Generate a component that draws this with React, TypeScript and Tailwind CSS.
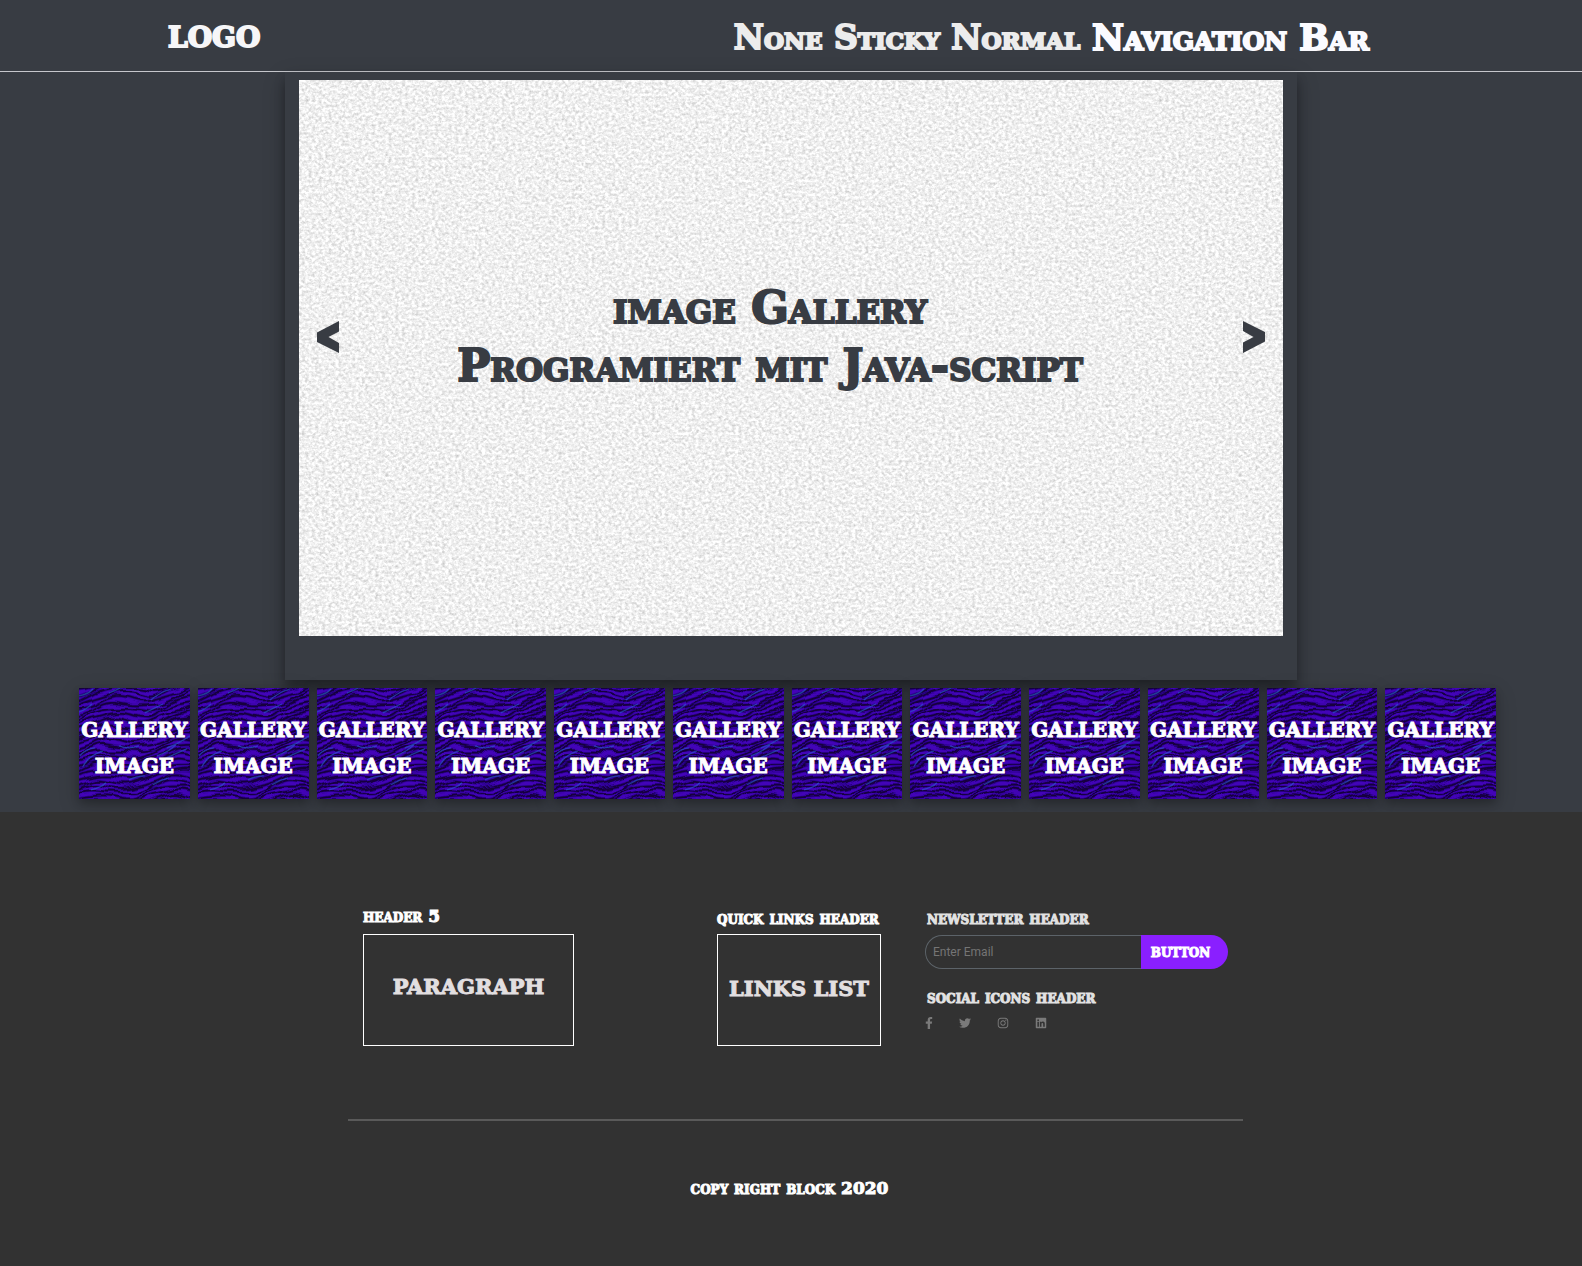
import React from "react";
import { FaFacebookF, FaTwitter, FaInstagram, FaLinkedin } from "react-icons/fa";

const THUMBS = Array.from({ length: 12 }, (_, i) => i);

const STRIPES = Array.from({ length: 32 }, (_, r) => {
  const base = r * 5 - 16;
  const pts: string[] = [];
  for (let x = -8; x <= 120; x += 4) {
    const y = base - x * 0.14 + 4 * Math.sin(x / 13 + r * 0.1 + 1.4) + Math.sin(x / 7 + r * 1.7);
    pts.push(`${x} ${y.toFixed(1)}`);
  }
  return "M" + pts.join(" L");
});

const GLINTS = [
  "M0 8 Q10 6 14 1",
  "M30 5 Q38 2 43 -1",
  "M72 12 Q80 5 92 1",
  "M0 24 Q8 21 13 16",
  "M66 25 Q76 20 84 16",
  "M1 68 Q6 61 16 60",
  "M4 79 Q9 68 24 63",
  "M78 68 Q90 64 97 57",
  "M88 60 Q100 56 111 48",
  "M84 72 Q96 66 108 61",
  "M12 102 Q22 100 27 95",
  "M50 92 Q58 88 66 88",
  "M74 97 Q82 92 90 90",
  "M40 58 Q50 62 60 58",
];

function ZebraTexture() {
  return (
    <svg className="absolute inset-0 h-full w-full" viewBox="0 0 111 111" preserveAspectRatio="none" aria-hidden="true">
      <filter id="ripple" x="0" y="0" width="100%" height="100%" colorInterpolationFilters="sRGB">
        <feTurbulence type="fractalNoise" baseFrequency="0.04 0.06" numOctaves="2" seed="4" result="n" />
        <feDisplacementMap in="SourceGraphic" in2="n" scale="12" xChannelSelector="R" yChannelSelector="G" />
        <feGaussianBlur stdDeviation="0.4" />
      </filter>
      <rect width="111" height="111" fill="#3600a4" />
      <g filter="url(#ripple)" fill="none">
        <rect x="-10" y="-10" width="131" height="131" fill="#4304b8" />
        {STRIPES.map((d, i) => (
          <g key={i}>
            <path d={d} stroke="#22007a" strokeWidth="3.4" opacity="0.6" />
            <path d={d} stroke="#16003e" strokeWidth="1.7" />
          </g>
        ))}
      </g>
      {GLINTS.map((d) => (
        <path key={d} d={d} fill="none" stroke="#2a62d0" strokeWidth="1.3" opacity="0.6" />
      ))}
    </svg>
  );
}

function StoneTexture() {
  return (
    <svg className="absolute inset-0 h-full w-full" aria-hidden="true">
      <filter id="stone" x="0" y="0" width="100%" height="100%" colorInterpolationFilters="sRGB">
        <feTurbulence type="fractalNoise" baseFrequency="0.3 0.36" numOctaves="3" seed="8" />
        <feColorMatrix
          type="matrix"
          values="0.32 0.16 0 0 0.7  0.32 0.16 0 0 0.7  0.32 0.16 0 0 0.7  0 0 0 0 1"
        />
      </filter>
      <rect width="100%" height="100%" fill="#ebebeb" />
      <rect width="100%" height="100%" filter="url(#stone)" />
    </svg>
  );
}

function Arrow({ label, flip }: { label: string; flip?: boolean }) {
  return (
    <button type="button" aria-label={label} className="h-8 w-[22px] shrink-0">
      <svg viewBox="0 0 22 32" className={flip ? "h-8 w-[22px] rotate-180" : "h-8 w-[22px]"} fill="#383c43">
        <polygon points="22,0 22,10.5 11.5,16 22,22 22,32 0,21 0,11.5" />
      </svg>
    </button>
  );
}

const small = "text-[17px] leading-6 font-bold [font-variant:small-caps] whitespace-nowrap [-webkit-text-stroke:1px]";
const boxed = "flex h-28 items-center justify-center border border-white text-[21px] font-bold text-[#e2dfe0] [-webkit-text-stroke:1px]";

export default function App() {
  return (
    <div className="min-h-screen bg-[#323232] font-['DejaVu_Serif',serif] text-white">
      <div className="bg-[#383c43]">
        <header className="flex h-[72px] items-center justify-between border-b border-[#c6c7cc] pt-1 pr-[213px] pl-[168px] font-bold">
          <a href="#home" className="text-[28px] text-[#f6f6f8] [-webkit-text-stroke:2px]">LOGO</a>
          <nav className="flex items-center gap-3 whitespace-nowrap [font-variant:small-caps]">
            <a href="#top" className="text-[33px] leading-10 text-[#ececec] [-webkit-text-stroke:2px]">
              None Sticky Normal
            </a>
            <a href="#nav" className="text-[35px] leading-10 text-[#fbfbff] [-webkit-text-stroke:2px]">Navigation Bar</a>
          </nav>
        </header>

        <main>
          <section className="mx-auto w-[64%] px-[14px] pt-2 pb-11 shadow-[0_8px_10px_rgba(0,0,0,0.25),0_8px_20px_rgba(0,0,0,0.25)]">
            <div className="relative aspect-[984/556]">
              <StoneTexture />
              <div className="relative flex h-full items-center justify-between px-[18px] pb-[42px]">
                <Arrow label="Previous image" />
                <h1 className="flex-1 pr-[42px] text-center text-[44px] leading-[58px] font-bold text-[#383c43] [font-variant:small-caps] [-webkit-text-stroke:2px]">
                  image Gallery
                  <br />
                  Programiert mit Java-script
                </h1>
                <Arrow label="Next image" flip />
              </div>
            </div>
          </section>

          <section className="mt-2 grid grid-cols-12 gap-2 pr-[86px] pb-[13px] pl-[5%]">
            {THUMBS.map((i) => (
              <button
                key={i}
                type="button"
                className="relative flex aspect-square items-center justify-center shadow-[0_4px_8px_rgba(0,0,0,0.2),0_6px_20px_rgba(0,0,0,0.2)]"
              >
                <ZebraTexture />
                <span className="relative pt-2 text-center text-[20px] leading-9 font-bold [-webkit-text-stroke:1px]">
                  GALLERY
                  <br />
                  IMAGE
                </span>
              </button>
            ))}
          </section>
        </main>
      </div>

      <footer className="relative bg-[#323232] pt-[92px] pb-[66px] pl-[9px]">
        <div className="mx-auto max-w-[895px]">
          <div className="flex items-start px-[15px]">
            <section className="mr-auto w-[211px]">
              <h5 className={small}>header 5</h5>
              <p className={`${boxed} mt-[6px] pb-[6px]`}>PARAGRAPH</p>
            </section>
            <section className="w-[164px] pt-[2px]">
              <h5 className={small}>quick links header</h5>
              <div className={`${boxed} mt-1 pb-[2px]`}>
                <a href="#links">LINKS LIST</a>
              </div>
            </section>
            <section className="ml-11 w-[303px] pt-[2px] text-[#e2e2e2]">
              <h5 className={`${small} pl-[2px]`}>newsletter header</h5>
              <form className="mt-[5px] flex h-[34px]" onSubmit={(e) => e.preventDefault()}>
                <input
                  type="email"
                  aria-label="Email"
                  placeholder="Enter Email"
                  className="min-w-0 flex-1 rounded-l-full border border-r-0 border-[#5c6369] pl-[7px] font-['Roboto',sans-serif] text-[12px] placeholder:text-[#757575]"
                />
                <button
                  type="submit"
                  className="w-[87px] rounded-r-full bg-[#8a1fff] pr-2 pb-[2px] text-[17px] leading-6 font-bold text-white [font-variant:small-caps] [-webkit-text-stroke:1px]"
                >
                  button
                </button>
              </form>
              <h5 className={`${small} mt-4 pl-[2px]`}>social icons header</h5>
              <div className="mt-2 flex gap-[26px] text-[12px] text-[#7a7a7a]">
                <a href="#facebook" aria-label="Facebook" className="w-2"><FaFacebookF className="-ml-[2px]" /></a>
                <a href="#twitter" aria-label="Twitter"><FaTwitter /></a>
                <a href="#instagram" aria-label="Instagram"><FaInstagram /></a>
                <a href="#linkedin" aria-label="LinkedIn"><FaLinkedin /></a>
              </div>
            </section>
          </div>
          <hr className="mt-[73px] border-t-2 border-[#5a5a5a]" />
          <p className={`${small} mt-[55px] pr-3 text-center`}>copy right block 2020</p>
        </div>
      </footer>
    </div>
  );
}
